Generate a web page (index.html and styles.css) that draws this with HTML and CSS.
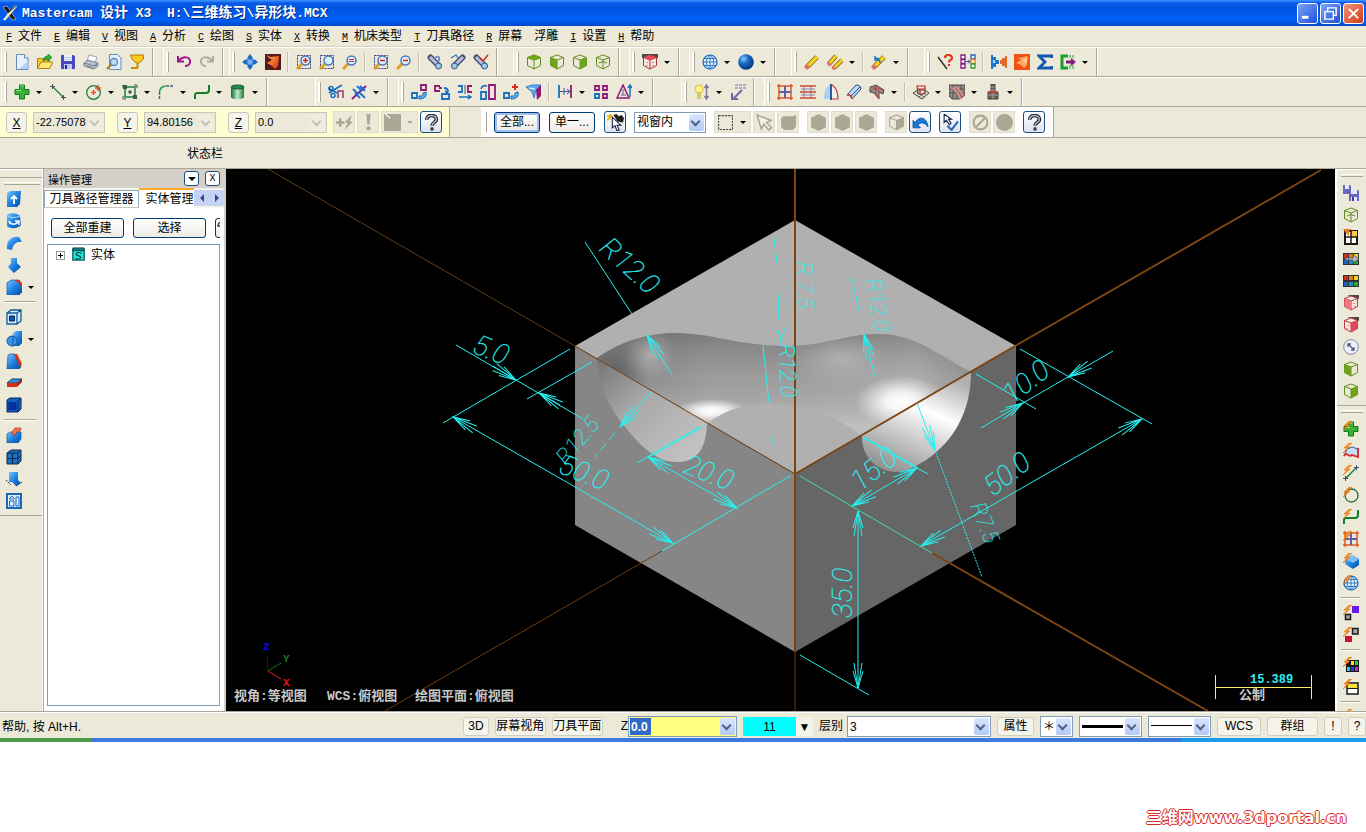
FILE: index.html
```html
<!DOCTYPE html>
<html lang="zh-CN">
<head>
    <meta charset="UTF-8">
    <meta name="viewport" content="width=device-width, initial-scale=1.0">
    <title>Mastercam 设计 X3</title>
    <link rel="stylesheet" href="styles.css">
</head>
<body>
    <!-- icon sprite -->
    <svg class="sprite" width="0" height="0" aria-hidden="true">
        <defs>
            <linearGradient id="gBlue" x1="0" y1="0" x2="1" y2="1"><stop offset="0" stop-color="#7cc4ff"/><stop offset=".5" stop-color="#1c80e0"/><stop offset="1" stop-color="#0848a0"/></linearGradient>
            <linearGradient id="gGreen"><stop offset="0" stop-color="#0c6a30"/><stop offset=".5" stop-color="#c0ecd0"/><stop offset="1" stop-color="#187838"/></linearGradient>
            <linearGradient id="gOrange" x1="0" y1="0" x2="1" y2="1"><stop offset="0" stop-color="#ffb060"/><stop offset="1" stop-color="#d83000"/></linearGradient>
            <radialGradient id="gSphere" cx=".35" cy=".3" r=".7"><stop offset="0" stop-color="#90d0ff"/><stop offset=".4" stop-color="#2070c8"/><stop offset="1" stop-color="#003880"/></radialGradient>
            <g id="lens"><path d="M1 15l5-5" stroke="#e0a020" stroke-width="3"/><circle cx="9.500" cy="6.500" r="4.500" fill="#d8f0ff" stroke="#5078b8" stroke-width="1.500"/></g>
            <path id="dash" d="M1.500 1.500h13v13h-13z" fill="none" stroke="#303878" stroke-dasharray="2 1"/>
            <path id="hex" d="M8 1l6.500 2.500v8L8 15l-6.500-3.500v-8zM1.500 3.500L8 6l6.500-2.500M8 6v9" stroke-width="1"/>
            <path id="bolt" d="M6 0L1 5h3L0 10l7-6H4l5-4z" fill="#ff9820" stroke="#e06000" stroke-width=".5"/>
        </defs>
        <symbol id="new" viewBox="0 0 16 16"><path d="M2.500 .5h8l3.500 3.500v11.500h-11.500z" fill="#e8f2ff" stroke="#6888b8"/><path d="M10.500 .5v3.500h3.500" fill="#fff" stroke="#6888b8"/><path d="M5 15h9V7z" fill="#b0d0f8"/></symbol>
        <symbol id="open" viewBox="0 0 16 16"><path d="M.5 14.500v-10h5l1 1.500h6v8.500z" fill="#f8c830" stroke="#b08010"/><path d="M.5 14.500L4 8h12l-3.500 6.500z" fill="#ffe878" stroke="#b08010"/><path d="M6 7c0-4 3-5 5-5V0l4 3.500L11 7V5C9 5 8 6 6 7z" fill="#30b030" stroke="#107010" stroke-width=".6"/></symbol>
        <symbol id="save" viewBox="0 0 16 16"><path d="M1 1h12.500L15 2.500V15H1z" fill="#4848b8"/><path d="M4 1h8v6H4z" fill="#f0f0ff"/><path d="M4 3.500h8M4 5.500h8" stroke="#a8b0d8" stroke-width=".7"/><path d="M4 10h8v5H4z" fill="#c0c8f0"/><path d="M5 11h2v4H5z" fill="#28288c"/></symbol>
        <symbol id="print" viewBox="0 0 16 16"><path d="M4 7l2-6 8 2-2 6z" fill="#fff" stroke="#8890a0" stroke-width=".8"/><path d="M1 9l4-3 10 3v3l-4 3-10-3z" fill="#b8c0cc" stroke="#687080" stroke-width=".8"/><path d="M1 9l10 3 4-3M4 12l6 2" fill="none" stroke="#687080" stroke-width=".8"/><path d="M12 12l2-1.500" stroke="#3080e0"/></symbol>
        <symbol id="preview" viewBox="0 0 16 16"><path d="M3.500 .5h8L15 4v11.500H3.500z" fill="#e0f0ff" stroke="#6888b8"/><circle cx="8" cy="8" r="3.500" fill="#b8dcf8" stroke="#5888b8" stroke-width="1.300"/><path d="M1 15l5-5" stroke="#b07830" stroke-width="2"/></symbol>
        <symbol id="cup" viewBox="0 0 16 16"><path d="M1.500 1h13v4L10 9H7L3 5z" fill="#ffc820" stroke="#b07800"/><path d="M8.500 9v5H2" fill="none" stroke="#c89000" stroke-width="2"/></symbol>
        <symbol id="undo" viewBox="0 0 16 16"><path d="M2 2v5.500h6" fill="none" stroke="#a01090" stroke-width="2"/><path d="M3 7c3-5 12-5 11 1 0 3-3 4-5 4" fill="none" stroke="#a01090" stroke-width="2"/></symbol>
        <symbol id="redo" viewBox="0 0 16 16"><path d="M14 2v5.500H8" fill="none" stroke="#b0ad9c" stroke-width="2"/><path d="M13 7C10 2 1 2 2 8c0 3 3 4 5 4" fill="none" stroke="#b0ad9c" stroke-width="2"/></symbol>
        <symbol id="fit" viewBox="0 0 16 16"><path d="M8 0l3 4H5zM8 16l3-4H5zM0 8l4-3v6zM16 8l-4-3v6z" fill="#1868c8"/><circle cx="8" cy="8" r="3.500" fill="#70b0f0" stroke="#1868c8" stroke-width="1.500"/></symbol>
        <symbol id="repaint" viewBox="0 0 16 16"><path d="M0 0h16v16H0z" fill="#58181c"/><path d="M2 1l3 2 9-1-1 10-3 3-3-3-5-3 5-3-4-3z" fill="url(#gOrange)"/></symbol>
        <symbol id="zwin" viewBox="0 0 16 16"><use href="#dash"/><use href="#lens"/><path d="M9.500 4v5M7 6.500h5" stroke="#e02010" stroke-width="1.500"/></symbol>
        <symbol id="ztarget" viewBox="0 0 16 16"><use href="#dash"/><use href="#lens"/></symbol>
        <symbol id="zundo" viewBox="0 0 16 16"><use href="#lens"/><path d="M7 5.500h5M7 7.500h5" stroke="#e02010" stroke-width="1.200"/></symbol>
        <symbol id="zdash" viewBox="0 0 16 16"><use href="#dash"/><use href="#lens"/><path d="M7 6.500h5" stroke="#e02010" stroke-width="1.500"/></symbol>
        <symbol id="zout" viewBox="0 0 16 16"><use href="#lens"/><path d="M7 6.500h5" stroke="#e02010" stroke-width="1.500"/></symbol>
        <symbol id="spinl" viewBox="0 0 16 16"><path d="M3.500 3.500l8 8" stroke="#485070" stroke-width="6" stroke-linecap="round"/><path d="M3 3l7 7" stroke="#b8c0dc" stroke-width="3"/><circle cx="11.500" cy="12" r="3" fill="#98ccf0" stroke="#405080"/><path d="M8 3h4v4" fill="none" stroke="#2858b8" stroke-width="1.200"/></symbol>
        <symbol id="spinr" viewBox="0 0 16 16"><path d="M12.500 3.500l-8 8" stroke="#485070" stroke-width="6" stroke-linecap="round"/><path d="M13 3l-7 7" stroke="#b8c0dc" stroke-width="3"/><circle cx="4.500" cy="12" r="3" fill="#98ccf0" stroke="#405080"/><path d="M1 4l5-3 2 3" fill="none" stroke="#2870d0" stroke-width="1.200"/></symbol>
        <symbol id="spinx" viewBox="0 0 16 16"><path d="M3.500 3.500l8 8" stroke="#485070" stroke-width="6" stroke-linecap="round"/><path d="M3 3l7 7" stroke="#b8c0dc" stroke-width="3"/><circle cx="11.500" cy="12" r="3" fill="#98ccf0" stroke="#405080"/><path d="M7 4l3 3 5-6" fill="none" stroke="#d02818" stroke-width="1.500"/></symbol>
        <symbol id="ctop" viewBox="0 0 16 16"><use href="#hex" fill="none" stroke="#608c20"/><path d="M8 1l6.500 2.500L8 6 1.500 3.500z" fill="#70a418" stroke="#70a418"/></symbol>
        <symbol id="cfront" viewBox="0 0 16 16"><use href="#hex" fill="none" stroke="#608c20"/><path d="M1.500 3.500L8 6v9l-6.500-3.500z" fill="#70a418"/></symbol>
        <symbol id="cside" viewBox="0 0 16 16"><use href="#hex" fill="none" stroke="#608c20"/><path d="M14.500 3.500L8 6v9l6.500-3.500z" fill="#70a418"/></symbol>
        <symbol id="ciso" viewBox="0 0 16 16"><use href="#hex" fill="none" stroke="#608c20"/><path d="M4 9l4-1.500L12 9" fill="none" stroke="#608c20"/></symbol>
        <symbol id="cred" viewBox="0 0 16 16"><path d="M0 0h16v4H0z" fill="#504848"/><use href="#hex" fill="#f8e8e0" stroke="#a03838"/><path d="M8 1l6.500 2.500L8 6 1.500 3.500z" fill="#e84858"/><path d="M5 8v1M11 8v1M5 11v1M11 11v1" stroke="#d03040"/></symbol>
        <symbol id="credl" viewBox="0 0 16 16"><path d="M4 0h12v4z" fill="#504848"/><use href="#hex" fill="#f8e8e0" stroke="#b83848"/><path d="M1.500 3.500L8 6v9l-6.500-3.500z" fill="#f07880"/><path d="M11 8v1M12 11v1" stroke="#d03040"/></symbol>
        <symbol id="credr" viewBox="0 0 16 16"><path d="M4 0h12v4z" fill="#504848"/><use href="#hex" fill="#f8e8e0" stroke="#b83848"/><path d="M14.500 3.500L8 6v9l6.500-3.500z" fill="#e04858"/><path d="M5 8v1M4 11v1" stroke="#d03040"/></symbol>
        <symbol id="globe" viewBox="0 0 16 16"><circle cx="8" cy="8" r="7" fill="#e0f0ff" stroke="#1868b8" stroke-width="1.200"/><path d="M8 1v14M1 8h14M2 4.500h12M2 11.500h12M8 1C3 5 3 11 8 15M8 1c5 4 5 10 0 14" fill="none" stroke="#1868b8" stroke-width=".8"/></symbol>
        <symbol id="sphere" viewBox="0 0 16 16"><circle cx="8" cy="8" r="7.800" fill="url(#gSphere)"/></symbol>
        <symbol id="pencil" viewBox="0 0 16 16"><path d="M3 13L13 3" stroke="#806010" stroke-width="5"/><path d="M3 13L13 3" stroke="#f8d020" stroke-width="3.500"/><path d="M1.500 14.500l3-3" stroke="#e07068" stroke-width="4.500"/></symbol>
        <symbol id="pencils" viewBox="0 0 16 16"><path d="M2 10l7-8M7 14l8-8" stroke="#806010" stroke-width="4.500"/><path d="M2 10l7-8M7 14l8-8" stroke="#f8d020" stroke-width="3"/><path d="M1 11l2-2M5.500 15l2-2" stroke="#e07068" stroke-width="4"/></symbol>
        <symbol id="unpencil" viewBox="0 0 16 16"><path d="M3 13L13 3" stroke="#806010" stroke-width="5"/><path d="M3 13L13 3" stroke="#f8d020" stroke-width="3.500"/><path d="M1.500 14.500l3-3" stroke="#e07068" stroke-width="4.500"/><path d="M4 5c3-2 5 0 5 4M4 2v4h4" fill="none" stroke="#1878c0" stroke-width="1.500"/></symbol>
        <symbol id="ask" viewBox="0 0 16 16"><path d="M1 3l9 12" stroke="#202020" stroke-width="1.300"/><path d="M8 4c0-4 7-4 7 0 0 2-3 2-3 4.500M12 10v2" fill="none" stroke="#e03818" stroke-width="2.200"/></symbol>
        <symbol id="swap" viewBox="0 0 16 16"><path d="M1 1h4v4H1zM1 5.500h4v4H1zM1 10h4v4H1z" fill="#fff" stroke="#801880" stroke-width="1.300"/><path d="M11 1h4v4h-4z" fill="#fff" stroke="#2060c0" stroke-width="1.300"/><path d="M11 5.500h4v4h-4z" fill="#fff" stroke="#e08020" stroke-width="1.300"/><path d="M11 10h4v4h-4z" fill="#fff" stroke="#30a030" stroke-width="1.300"/><path d="M6 7.500h4M8 5.500l2 2-2 2" fill="none" stroke="#3050b0"/></symbol>
        <symbol id="puzzle" viewBox="0 0 16 16"><path d="M0 1h2v2h3v3h3v4H5v3H2v2H0z" fill="#1878d0"/><path d="M16 2v12h-2v-2h-3v-2H9V6h2V4h3V2z" fill="#e06828"/><path d="M2 6h2v3H2z" fill="#b8dcf8"/></symbol>
        <symbol id="orange" viewBox="0 0 16 16"><path d="M0 0h16v16H0z" fill="#f05010"/><path d="M2 3l3 1 9-2-1 9-3 3-3-3-5-2 5-3z" fill="#ffa860"/><path d="M8 6l5-2-1 6z" fill="#ffd0a0"/></symbol>
        <symbol id="sigma" viewBox="0 0 16 16"><path d="M15 4V2H2l6 6-6 6h13v-2" fill="none" stroke="#1058b0" stroke-width="2.800"/></symbol>
        <symbol id="gout" viewBox="0 0 16 16"><path d="M8 2H2v12h6" fill="none" stroke="#18a028" stroke-width="3"/><path d="M10 1v14M13 1v14" stroke="#18a028" stroke-dasharray="3 7 4 2"/><path d="M6 6.500h5V4l5 4-5 4V9.500H6z" fill="#801880"/></symbol>
        <symbol id="plus" viewBox="0 0 16 16"><path d="M5.500 1h5v4.500H15v5h-4.500V15h-5v-4.500H1v-5h4.500z" fill="#38b038" stroke="#187818"/><path d="M6.500 2h3M2 6.500h5" stroke="#98e890"/></symbol>
        <symbol id="line" viewBox="0 0 16 16"><path d="M3 3l10 10" stroke="#188038" stroke-width="1.300"/><path d="M2.500 0v5M0 2.500h5M13.500 11v5M11 13.500h5" stroke="#405060"/></symbol>
        <symbol id="circle" viewBox="0 0 16 16"><circle cx="7.500" cy="8.500" r="6.800" fill="none" stroke="#188038" stroke-width="1.300"/><path d="M7.500 6v5M5 8.500h5M12 1v6M9 4h6" stroke="#e05020" stroke-width="1.500"/></symbol>
        <symbol id="rect" viewBox="0 0 16 16"><path d="M3 3h10v10H3z" fill="none" stroke="#188038" stroke-width="1.500"/><path d="M0 1h5v4H1zM11 11h4v4h-4zM6.500 6.500h3v3h-3z" fill="#405850"/><path d="M12 1h3v3M1 12v3h3" fill="none" stroke="#405850"/></symbol>
        <symbol id="fillet" viewBox="0 0 16 16"><path d="M1.500 15V9" stroke="#506080" stroke-width="1.500" stroke-dasharray="3 1"/><path d="M1.500 9c0-4 2-6.500 6-7" fill="none" stroke="#18a050" stroke-width="1.500"/><path d="M8 2h8" stroke="#506080" stroke-width="1.500" stroke-dasharray="3 1"/></symbol>
        <symbol id="spline" viewBox="0 0 16 16"><path d="M1 15v-4c0-2 1-2 3-2h8c2 0 3-1 3-3V1" fill="none" stroke="#108028" stroke-width="2"/></symbol>
        <symbol id="cyl" viewBox="0 0 16 16"><path d="M1 3v10c0 3 13 3 13 0V3z" fill="url(#gGreen)"/><ellipse cx="7.500" cy="3" rx="6.500" ry="2" fill="#288848" stroke="#0c6030"/></symbol>
        <symbol id="trim" viewBox="0 0 16 16"><path d="M0 4l9 5M1 9l8-5 5-3" stroke="#1870b8" stroke-width="1.800"/><circle cx="3" cy="4.500" r="2" fill="none" stroke="#1870b8" stroke-width="1.500"/><circle cx="5" cy="11.500" r="2" fill="none" stroke="#1870b8" stroke-width="1.500"/><path d="M10 14V7h5v7" fill="none" stroke="#903878" stroke-width="1.500"/></symbol>
        <symbol id="break" viewBox="0 0 16 16"><path d="M1 15L15 2" stroke="#901890" stroke-width="2"/><path d="M2 5l5 5M6 2l5 5M9 9l5 5M4 9l5 5M9 2l5 5" stroke="#1870d0" stroke-width="1.800"/></symbol>
        <symbol id="xmove" viewBox="0 0 16 16"><path d="M1 9h5v5H1z" fill="none" stroke="#1870c0" stroke-width="1.800"/><path d="M10 1h5v5h-5z" fill="none" stroke="#901878" stroke-width="1.800"/><path d="M8 12h3c1-1 1-2 1-3l3-1c1 4-1 7-7 7z" fill="#60a8e8" stroke="#1870c0"/></symbol>
        <symbol id="xrot" viewBox="0 0 16 16"><path d="M6 2H1v5h5M5 4h3" fill="none" stroke="#901878" stroke-width="1.800"/><path d="M8 10h7v5H8zM10 4c3 0 4 1 4 4M11 7l3 2" fill="none" stroke="#1870c0" stroke-width="1.800"/></symbol>
        <symbol id="xmirror" viewBox="0 0 16 16"><path d="M1 2h4v6H1" fill="none" stroke="#1870c0" stroke-width="1.800"/><path d="M15 2h-4v6h4" fill="none" stroke="#901878" stroke-width="1.800"/><path d="M8 1v9" stroke="#405080"/><path d="M2 13h12M11 11l3 2-3 2" fill="none" stroke="#1870c0" stroke-width="1.500"/></symbol>
        <symbol id="xscale" viewBox="0 0 16 16"><path d="M1 8h5v7H1z" fill="none" stroke="#1870c0" stroke-width="1.800"/><path d="M9 1h6v14H9z" fill="none" stroke="#901878" stroke-width="1.800"/><path d="M1 5c1-3 3-4 6-3" fill="none" stroke="#1870c0" stroke-width="1.500"/></symbol>
        <symbol id="xadd" viewBox="0 0 16 16"><path d="M1 9h5v5H1z" fill="none" stroke="#1870c0" stroke-width="1.800"/><path d="M8 12h3c1-1 1-2 1-3l3-1c1 4-1 7-7 7z" fill="#60a8e8" stroke="#1870c0"/><path d="M12 0v6M9 3h6" stroke="#e02818" stroke-width="2"/></symbol>
        <symbol id="xface" viewBox="0 0 16 16"><path d="M0 3l6-2h9l-5 5-2 8-2-6z" fill="#60a8f0" stroke="#1860b0" stroke-width=".7"/><path d="M10 6l5-5v11l-4 4z" fill="#901878"/><path d="M3 4l6 1" stroke="#fff"/></symbol>
        <symbol id="xspan" viewBox="0 0 16 16"><path d="M2 1v13" stroke="#1870c0" stroke-width="1.800"/><path d="M14 1v13" stroke="#901878" stroke-width="1.800"/><path d="M3 7.500h10M10 5l3 2.500L10 10M7 4v7" fill="none" stroke="#405090"/></symbol>
        <symbol id="xgrid" viewBox="0 0 16 16"><path d="M2 2h4v4H2zM10 2h4v4h-4z" fill="none" stroke="#901878" stroke-width="1.800"/><path d="M2 10h4v4H2z" fill="none" stroke="#1870c0" stroke-width="1.800"/><path d="M10 10h4v4h-4z" fill="none" stroke="#901878" stroke-width="1.800"/></symbol>
        <symbol id="xtri" viewBox="0 0 16 16"><path d="M1 14L7 1l6 13z" fill="none" stroke="#901878" stroke-width="1.500"/><path d="M7 5v6M5 11h5" stroke="#506080"/><path d="M14 1v12M12 4l2-3 2 3" fill="none" stroke="#1870c0" stroke-width="1.500"/></symbol>
        <symbol id="bulb" viewBox="0 0 16 16"><circle cx="5" cy="5" r="4" fill="#fff090" stroke="#d8c040"/><path d="M3 9h4v6H3z" fill="#d8c860"/><path d="M12.500 2v12M10.500 4l2-3 2 3M10.500 12l2 3 2-3" fill="none" stroke="#8078a8" stroke-width="1.500"/></symbol>
        <symbol id="dimarrow" viewBox="0 0 16 16"><path d="M12 6l-9 9M2 9v6h6" fill="none" stroke="#7068a0" stroke-width="2"/><path d="M5 1h11M5 4h11" stroke="#7068a0" stroke-dasharray="3 1"/></symbol>
        <symbol id="snet" viewBox="0 0 16 16"><path d="M2 2h12v12H2zM0 2h16M0 14h16M2 0v16M14 0v16" fill="none" stroke="#e05820" stroke-width="1.500"/><path d="M8 2v12M2 8h12" stroke="#6060a0" stroke-width="2"/></symbol>
        <symbol id="sruled" viewBox="0 0 16 16"><path d="M0 2h16M0 8h16M0 14h16" stroke="#d04828" stroke-width="1.500"/><path d="M1 5h14M1 11h14M4 2v12M11 2v12" stroke="#7070a0" stroke-width=".8"/></symbol>
        <symbol id="sarc" viewBox="0 0 16 16"><path d="M8 0C2 3 1 9 1 15h7z" fill="#a8d0f0"/><path d="M8 15h7c0-7-2-12-7-15" fill="#f0f0f8" stroke="#c04030" stroke-width="1.200"/><path d="M8 0v16" stroke="#204888" stroke-width="1.800"/></symbol>
        <symbol id="ssweep" viewBox="0 0 16 16"><path d="M1 11L10 1c3 0 5 1 5 4L6 15c-1-3-3-4-5-4zM5 12l9-9" fill="#b8d8f8" stroke="#304878"/><path d="M1 11c2-1 5 1 5 4" fill="none" stroke="#d03828" stroke-width="1.500"/></symbol>
        <symbol id="smesh" viewBox="0 0 16 16"><path d="M1 3l6-2 8 5-1 4-4-2v7l-5-6-4-1z" fill="#909090" stroke="#504848"/><path d="M2 7c3-4 7-4 13 0M4 3l8 6M8 2c-3 3-2 8 2 12" fill="none" stroke="#c83828"/></symbol>
        <symbol id="sbox" viewBox="0 0 16 16"><path d="M0 9l5-3h7l4 3-7 6z" fill="#d8e0d8" stroke="#384838"/><path d="M4 2h8v8H5zM4 5h8M7 5v5" fill="none" stroke="#b82828" stroke-width="1.200"/><path d="M4 8l7 5M12 8l-6 5" stroke="#384838" stroke-width=".7"/></symbol>
        <symbol id="shatch" viewBox="0 0 16 16"><path d="M0 1h16v10l-5 4H3l-3-3z" fill="#8c8c8c" stroke="#484040"/><path d="M0 5h16M0 9h16M4 1v13M8 1v13M12 1v13" stroke="#584848" stroke-width=".8"/><path d="M2 4c5 0 6 5 10 11M6 3c4 1 6 5 8 9" fill="none" stroke="#e08888" stroke-width="2"/></symbol>
        <symbol id="stower" viewBox="0 0 16 16"><path d="M6 0h4v8h3v7H3V8h3z" fill="#686060" stroke="#403838"/><path d="M3 11h10M8 8v7" stroke="#a8a098"/><path d="M6 3h4M6 6h4" stroke="#a89890"/><path d="M3 8h10" stroke="#d04030" stroke-width="1.500"/></symbol>
        <symbol id="help" viewBox="0 0 16 16"><path d="M3.500 5.500c0-6 9.500-5 9 0C12 8.500 8.500 8 8.500 11" fill="none" stroke="#182030" stroke-width="3.500"/><path d="M3.500 5.500c0-6 9.500-5 9 0C12 8.500 8.500 8 8.500 11" fill="none" stroke="#b0b8c8" stroke-width="1.500"/><circle cx="8.500" cy="14" r="1.800" fill="#404858"/></symbol>
        <symbol id="dplus" viewBox="0 0 16 16"><path d="M0 8h8M4 4v8" stroke="#aaa795" stroke-width="2.500"/><path d="M15 1L8 8h3l-3 7 8-8h-3z" fill="#aaa795"/></symbol>
        <symbol id="dbang" viewBox="0 0 16 16"><path d="M6 0h4L9 10H7z" fill="#aaa795"/><circle cx="8" cy="13.500" r="2" fill="#aaa795"/></symbol>
        <symbol id="dsq" viewBox="0 0 16 16"><path d="M0 0h16v16H0z" fill="#aaa795"/><path d="M1 0l5 4" stroke="#fff"/></symbol>
        <symbol id="dbox" viewBox="0 0 16 16"><path d="M1.500 1.500h13v13h-13z" fill="none" stroke="#404048" stroke-dasharray="2 1"/></symbol>
        <symbol id="pick" viewBox="0 0 16 16"><path d="M6 1l3-1 2 2 3-1 2 3-1 4-5-1z" fill="#202020"/><path d="M0 2h5M3 0v5M0 6l5-5" stroke="#e8b820" stroke-width="1.800"/><path d="M5 3v10l2.500-2 2 5 2-1-2-4.500h3.500z" fill="#fff" stroke="#102040"/></symbol>
        <symbol id="dcursor" viewBox="0 0 16 16"><path d="M1 1l4 13 2.500-4.500L12 15l2.500-2L10 8l4-2z" fill="#f4f2ea" stroke="#aaa795" stroke-width="1.500"/></symbol>
        <symbol id="dhex" viewBox="0 0 16 16"><path d="M8 0l7 3.500v9L8 16l-7-3.500v-9z" fill="#aaa795"/></symbol>
        <symbol id="dball" viewBox="0 0 16 16"><path d="M3 2h9l3-1v11l-3 3H4l-3-3V4z" fill="#aaa795"/></symbol>
        <symbol id="dcube" viewBox="0 0 16 16"><use href="#hex" fill="none" stroke="#aaa795"/><path d="M8 6l6.500-2.500v8L8 15z" fill="#aaa795"/></symbol>
        <symbol id="back" viewBox="0 0 16 16"><path d="M1 6v7h7L5.500 10.500C8 7 12 8 15 12 14 2 6 2 3 8z" fill="#1878d8" stroke="#084898" stroke-width=".8"/></symbol>
        <symbol id="accept" viewBox="0 0 16 16"><path d="M2 0v8l2-2 3 4 1.500-1.500L6 5h3z" fill="#fff" stroke="#102040"/><path d="M5 11l4 4 6-8" fill="none" stroke="#2868c0" stroke-width="2"/></symbol>
        <symbol id="dno" viewBox="0 0 16 16"><circle cx="8" cy="8" r="6.500" fill="none" stroke="#aaa795" stroke-width="2"/><path d="M4 12l8-8" stroke="#aaa795" stroke-width="2"/></symbol>
        <symbol id="ddisc" viewBox="0 0 16 16"><circle cx="8" cy="8" r="8" fill="#aaa795"/></symbol>
        <symbol id="extrude" viewBox="0 0 16 16"><path d="M1 2l3-2h11l-1 13-3 3H1z" fill="url(#gBlue)"/><path d="M8 13V5M5 8l3-3 3 3" fill="none" stroke="#fff" stroke-width="1.800"/></symbol>
        <symbol id="revolve" viewBox="0 0 16 16"><path d="M1 2c3-3 11-2 13 1l1 9c-3 4-12 4-14 1z" fill="url(#gBlue)"/><path d="M3 8c1 4 7 4 9 1M9 8h4v4" fill="none" stroke="#fff" stroke-width="1.500"/><path d="M2 3c3 2 8 2 12 0" fill="none" stroke="#b8e0ff"/></symbol>
        <symbol id="sweep" viewBox="0 0 16 16"><path d="M1 14C0 6 5 1 13 2l3 5c-5-1-9 2-10 8z" fill="url(#gBlue)"/></symbol>
        <symbol id="loft" viewBox="0 0 16 16"><path d="M5 1h6v5l4 4-7 6-6-6 3-4z" fill="url(#gBlue)"/></symbol>
        <symbol id="sfillet" viewBox="0 0 16 16"><path d="M1 4l4-3h8l3 4v8l-3 3H1z" fill="url(#gBlue)" stroke="#185898" stroke-width=".7"/><path d="M9 1h4l3 4v5c-1-4-3-6-7-9z" fill="#d83018"/></symbol>
        <symbol id="shell" viewBox="0 0 16 16"><path d="M1 4h10v11H1zM1 4l4-3h10v11l-4 3M11 4l4-3" fill="#d8ecff" stroke="#185898" stroke-width="1.300"/><path d="M3.500 7h5v5h-5z" fill="#0858b0" stroke="#042858"/></symbol>
        <symbol id="boolean" viewBox="0 0 16 16"><path d="M7 2l3-2h6v12l-3 3H7z" fill="url(#gBlue)"/><circle cx="6" cy="10" r="5" fill="#3898e8" stroke="#1858a0"/><path d="M7 5v10" stroke="#1858a0"/></symbol>
        <symbol id="draft" viewBox="0 0 16 16"><path d="M2 2l2-1h5l6 13-2 2H1z" fill="url(#gBlue)" stroke="#185898" stroke-width=".7"/><path d="M8 1l3 0 5 10-2 3z" fill="#d83018"/></symbol>
        <symbol id="slab" viewBox="0 0 16 16"><path d="M1 8l5-4h10l-5 4z" fill="#3090e0" stroke="#104070"/><path d="M1 8h10v4H1z" fill="#d83018"/><path d="M11 8l5-4v3l-5 5z" fill="#b02010"/></symbol>
        <symbol id="solidbox" viewBox="0 0 16 16"><path d="M1 3l3-2h11v11l-3 3H1z" fill="#1060c0" stroke="#082850"/><path d="M2.500 5h8v8h-8z" fill="#0030a0"/><path d="M12 4l3-3M12 4v11" stroke="#082850"/></symbol>
        <symbol id="delf" viewBox="0 0 16 16"><path d="M1 7l3-2h11v7l-3 4H1z" fill="url(#gBlue)" stroke="#185898" stroke-width=".7"/><path d="M6 5l3-4h6l-1 3-3 1-2 3H7z" fill="#f07848" stroke="#a03010" stroke-width=".7"/></symbol>
        <symbol id="mesh4" viewBox="0 0 16 16"><path d="M1 4l4-3h10v11l-3 3H1z" fill="#1870c8" stroke="#102848"/><path d="M6.500 4v11M1 9.500h11l3-3M12 4v11M1 4h11l3-3" fill="none" stroke="#102848"/></symbol>
        <symbol id="flip" viewBox="0 0 16 16"><path d="M3 1h9v8l3 3-5 3-4-4H3z" fill="url(#gBlue)"/><path d="M0 9l5 5M10 15l6-4" stroke="#203040" stroke-dasharray="2 1"/></symbol>
        <symbol id="layout" viewBox="0 0 16 16"><path d="M1 1h14v14H1z" fill="#e0f0ff" stroke="#1868b8" stroke-width="2"/><path d="M3.500 5L6 3l2 2v1H3.500zM3.500 8h4.500v5H3.500zM10 4h3v9h-3z" fill="none" stroke="#1868b8"/></symbol>
        <symbol id="solidroot" viewBox="0 0 16 16"><path d="M2 3v11h12V3z" fill="#20e8e0" stroke="#106060" stroke-width="1.500"/><path d="M2 1h12v3H2z" fill="#108080" stroke="#084848"/><path d="M11 7c-2-2-6-1-5.500 1s5 1 5 3-4 2.500-5.500 1" fill="none" stroke="#084848" stroke-width="1.200"/></symbol>
        <symbol id="arrowl" viewBox="0 0 16 16"><path d="M6 3C3 3 2 5 2 7h4" fill="none" stroke="#303030" stroke-width="1.300"/></symbol>
        <symbol id="saves" viewBox="0 0 16 16"><path d="M0 0h7l1 1v8H0zM6 5h9l1 1v10H6z" fill="#6868c0"/><path d="M2 0h4v4H2zM8 5h6v4H8zM8 12h6v4H8z" fill="#e8e8ff"/><path d="M9 12h2v4H9z" fill="#404098"/></symbol>
        <symbol id="win4" viewBox="0 0 16 16"><path d="M2 2h12v13H2z" fill="#fff" stroke="#201818" stroke-width="2"/><path d="M8 2h6v6H8z" fill="#f8c840"/><path d="M8 2v13M2 8h12" stroke="#201818" stroke-width="1.500"/><path d="M0 0h8L6 3v4L3 4z" fill="#f07818"/></symbol>
        <symbol id="color6" viewBox="0 0 16 16"><path d="M0 2h16v12H0z" fill="#303030"/><path d="M1 3h4v4H1z" fill="#d03020"/><path d="M6 3h4v4H6z" fill="#e08020"/><path d="M11 3h4v4h-4z" fill="#f0d820"/><path d="M1 9h4v4H1z" fill="#2060c0"/><path d="M6 9h4v4H6z" fill="#2090c0"/><path d="M11 9h4v4h-4z" fill="#30a030"/></symbol>
        <symbol id="color6a" viewBox="0 0 16 16"><use href="#color6"/><path d="M2 7h8V4l6 4-6 4V9H2z" fill="#b0b8c8" stroke="#404858" stroke-width=".7"/></symbol>
        <symbol id="expand" viewBox="0 0 16 16"><circle cx="8" cy="8" r="7.300" fill="#f0f0fa" stroke="#8088a8"/><path d="M5 5l6 6M5 8V5h3M11 8v3H8" fill="none" stroke="#505880" stroke-width="1.300"/></symbol>
        <symbol id="qplus" viewBox="0 0 16 16"><use href="#plus"/><use href="#bolt"/></symbol>
        <symbol id="qsurf" viewBox="0 0 16 16"><path d="M1 13C4 8 6 15 9 12l6 2V5c-3 2-5-3-8 0l-3 1z" fill="#c8dcf8" stroke="#2858a8"/><path d="M1 13c3-5 5 2 8-1l6 2V5" fill="none" stroke="#e02828" stroke-width="1.800"/><use href="#bolt"/></symbol>
        <symbol id="qline" viewBox="0 0 16 16"><path d="M3 13L13 3" stroke="#188038" stroke-width="1.500"/><path d="M2.500 11v5M0 13.500h5M13.500 0v5M11 2.500h5" stroke="#405060"/><use href="#bolt"/></symbol>
        <symbol id="qcircle" viewBox="0 0 16 16"><circle cx="8.500" cy="8.500" r="6.500" fill="none" stroke="#306830" stroke-width="1.300"/><use href="#bolt"/></symbol>
        <symbol id="qspline" viewBox="0 0 16 16"><use href="#spline"/><use href="#bolt"/></symbol>
        <symbol id="qnet" viewBox="0 0 16 16"><use href="#snet"/><use href="#bolt"/></symbol>
        <symbol id="qcube" viewBox="0 0 16 16"><path d="M2 6l7-4 7 4v6l-6 4-8-5z" fill="url(#gBlue)"/><path d="M2 6l8 4 6-4-7-4z" fill="#80c0f8"/><use href="#bolt"/></symbol>
        <symbol id="qglobe" viewBox="0 0 16 16"><use href="#globe"/><use href="#bolt"/></symbol>
        <symbol id="qpurple" viewBox="0 0 16 16"><path d="M9 1h7v7H9z" fill="#6818f0"/><path d="M2.500 9.500h5v5h-5z" fill="#a8a8a8" stroke="#181818" stroke-width="1.500"/><use href="#bolt"/></symbol>
        <symbol id="qred" viewBox="0 0 16 16"><path d="M9.500 1.500h5.500v5.500H9.500z" fill="#a8a8a8" stroke="#181818" stroke-width="1.500"/><path d="M2 9h7v6H2z" fill="#c81030"/><use href="#bolt"/></symbol>
        <symbol id="qcolors" viewBox="0 0 16 16"><path d="M3 3h13v12H3z" fill="#181818"/><path d="M8 4h3v4H8z" fill="#f0e020"/><path d="M12 4h3v4h-3z" fill="#30d030"/><path d="M4 10h3v4H4z" fill="#20d0e0"/><path d="M8 10h3v4H8z" fill="#2040f0"/><path d="M12 10h3v4h-3z" fill="#c030d0"/><use href="#bolt"/></symbol>
        <symbol id="qwin" viewBox="0 0 16 16"><path d="M4 4h11v11H4z" fill="#fff" stroke="#181818" stroke-width="1.500"/><path d="M5 5h9v4H5z" fill="#f8e040"/><path d="M4 9.500h11" stroke="#181818"/><use href="#bolt"/></symbol>
    </svg>

    <div class="app">
        <header class="titlebar">
            <svg class="logo" viewBox="0 0 16 16"><path d="M1 2l4-1 9 13-4 1z" fill="#181818" stroke="#d8d8d8" stroke-width=".6"/><path d="M14 1L2 15" stroke="#f0e8c0" stroke-width="2.500"/><path d="M7 7l7-6" stroke="#202020"/></svg>
            <h1>Mastercam <span class="zh">设计</span> X3&nbsp; H:\<span class="zh">三维练习</span>\<span class="zh">异形块</span>.MCX</h1>
            <button class="win" aria-label="最小化"><svg viewBox="0 0 16 16"><path d="M2 12h7" stroke="#fff" stroke-width="3"/></svg></button>
            <button class="win" aria-label="还原"><svg viewBox="0 0 16 16"><path d="M5 6V2h9v8h-3M2 6h9v8H2z" fill="none" stroke="#fff" stroke-width="1.500"/></svg></button>
            <button class="win close" aria-label="关闭"><svg viewBox="0 0 16 16"><path d="M3 3l10 10M13 3L3 13" stroke="#fff" stroke-width="2"/></svg></button>
        </header>

        <nav class="menu">
            <button><u>F</u>文件</button>
            <button><u>E</u>编辑</button>
            <button><u>V</u>视图</button>
            <button><u>A</u>分析</button>
            <button><u>C</u>绘图</button>
            <button><u>S</u>实体</button>
            <button><u>X</u>转换</button>
            <button><u>M</u>机床类型</button>
            <button><u>T</u>刀具路径</button>
            <button><u>R</u>屏幕</button>
            <button>浮雕</button>
            <button><u>I</u>设置</button>
            <button><u>H</u>帮助</button>
        </nav>

        <div class="toolbar">
            <div class="group">
                <button class="tool" aria-label="新建"><svg><use href="#new"/></svg></button>
                <button class="tool" aria-label="打开"><svg><use href="#open"/></svg></button>
                <button class="tool" aria-label="保存"><svg><use href="#save"/></svg></button>
                <button class="tool" aria-label="打印"><svg><use href="#print"/></svg></button>
                <button class="tool" aria-label="打印预览"><svg><use href="#preview"/></svg></button>
                <button class="tool" aria-label="文件转换"><svg><use href="#cup"/></svg></button>
            </div>
            <div class="group">
                <button class="tool" aria-label="撤销"><svg><use href="#undo"/></svg></button>
                <button class="tool" aria-label="重做"><svg><use href="#redo"/></svg></button>
            </div>
            <div class="group near">
                <button class="tool" aria-label="适度化"><svg><use href="#fit"/></svg></button>
                <button class="tool" aria-label="重画"><svg><use href="#repaint"/></svg></button>
                <span class="sep"></span>
                <button class="tool" aria-label="视窗放大"><svg><use href="#zwin"/></svg></button>
                <button class="tool" aria-label="目标放大"><svg><use href="#ztarget"/></svg></button>
                <button class="tool" aria-label="恢复缩放"><svg><use href="#zundo"/></svg></button>
                <span class="sep"></span>
                <button class="tool" aria-label="缩小一半"><svg><use href="#zdash"/></svg></button>
                <button class="tool" aria-label="缩小"><svg><use href="#zout"/></svg></button>
                <span class="sep"></span>
                <button class="tool" aria-label="动态旋转"><svg><use href="#spinl"/></svg></button>
                <button class="tool" aria-label="前一视角"><svg><use href="#spinr"/></svg></button>
                <button class="tool" aria-label="指定视角"><svg><use href="#spinx"/></svg></button>
            </div>
            <div class="group mid">
                <button class="tool" aria-label="俯视图"><svg><use href="#ctop"/></svg></button>
                <button class="tool" aria-label="前视图"><svg><use href="#cfront"/></svg></button>
                <button class="tool" aria-label="右视图"><svg><use href="#cside"/></svg></button>
                <button class="tool" aria-label="等视图"><svg><use href="#ciso"/></svg></button>
            </div>
            <div class="group">
                <button class="tool drop" aria-label="绘图平面"><svg><use href="#cred"/></svg></button>
            </div>
            <div class="group">
                <button class="tool drop" aria-label="线框"><svg><use href="#globe"/></svg></button>
                <button class="tool drop" aria-label="着色"><svg><use href="#sphere"/></svg></button>
            </div>
            <div class="group mid">
                <button class="tool" aria-label="删除"><svg><use href="#pencil"/></svg></button>
                <button class="tool drop" aria-label="删除重复"><svg><use href="#pencils"/></svg></button>
                <span class="sep"></span>
                <button class="tool drop" aria-label="恢复删除"><svg><use href="#unpencil"/></svg></button>
            </div>
            <div class="group mid">
                <button class="tool" aria-label="分析图素"><svg><use href="#ask"/></svg></button>
                <button class="tool" aria-label="分析属性"><svg><use href="#swap"/></svg></button>
                <span class="sep"></span>
                <button class="tool" aria-label="比较"><svg><use href="#puzzle"/></svg></button>
                <button class="tool" aria-label="外部程序"><svg><use href="#orange"/></svg></button>
                <button class="tool" aria-label="统计"><svg><use href="#sigma"/></svg></button>
                <button class="tool drop" aria-label="输出"><svg><use href="#gout"/></svg></button>
            </div>
        </div>

        <div class="toolbar">
            <div class="group">
                <button class="tool drop" aria-label="绘点"><svg><use href="#plus"/></svg></button>
                <button class="tool drop" aria-label="直线"><svg><use href="#line"/></svg></button>
                <button class="tool drop" aria-label="圆弧"><svg><use href="#circle"/></svg></button>
                <button class="tool drop" aria-label="矩形"><svg><use href="#rect"/></svg></button>
                <button class="tool drop" aria-label="倒圆角"><svg><use href="#fillet"/></svg></button>
                <button class="tool drop" aria-label="曲线"><svg><use href="#spline"/></svg></button>
                <button class="tool drop" aria-label="基本实体"><svg><use href="#cyl"/></svg></button>
            </div>
            <div class="group wide">
                <button class="tool" aria-label="修剪"><svg><use href="#trim"/></svg></button>
                <button class="tool drop" aria-label="打断"><svg><use href="#break"/></svg></button>
            </div>
            <div class="group">
                <button class="tool" aria-label="平移"><svg><use href="#xmove"/></svg></button>
                <button class="tool" aria-label="旋转"><svg><use href="#xrot"/></svg></button>
                <button class="tool" aria-label="镜像"><svg><use href="#xmirror"/></svg></button>
                <button class="tool" aria-label="比例缩放"><svg><use href="#xscale"/></svg></button>
                <button class="tool" aria-label="动态平移"><svg><use href="#xadd"/></svg></button>
                <button class="tool" aria-label="投影"><svg><use href="#xface"/></svg></button>
                <span class="sep"></span>
                <button class="tool drop" aria-label="补正"><svg><use href="#xspan"/></svg></button>
                <button class="tool" aria-label="阵列"><svg><use href="#xgrid"/></svg></button>
                <button class="tool drop" aria-label="拖曳"><svg><use href="#xtri"/></svg></button>
            </div>
            <div class="group far">
                <button class="tool drop" aria-label="标注"><svg><use href="#bulb"/></svg></button>
                <button class="tool" aria-label="注解"><svg><use href="#dimarrow"/></svg></button>
            </div>
            <div class="group">
                <button class="tool" aria-label="网状曲面"><svg><use href="#snet"/></svg></button>
                <button class="tool" aria-label="直纹曲面"><svg><use href="#sruled"/></svg></button>
                <button class="tool" aria-label="旋转曲面"><svg><use href="#sarc"/></svg></button>
                <button class="tool" aria-label="扫描曲面"><svg><use href="#ssweep"/></svg></button>
                <button class="tool drop" aria-label="曲面修剪"><svg><use href="#smesh"/></svg></button>
                <span class="sep"></span>
                <button class="tool drop" aria-label="曲面延伸"><svg><use href="#sbox"/></svg></button>
                <button class="tool drop" aria-label="曲面熔接"><svg><use href="#shatch"/></svg></button>
                <button class="tool drop" aria-label="曲面曲线"><svg><use href="#stower"/></svg></button>
            </div>
        </div>

        <div class="ribbon">
            <div class="coords">
                <label class="axis" for="cx"><u>X</u></label>
                <span class="combo dim"><input id="cx" value="-22.75078"></span>
                <label class="axis" for="cy"><u>Y</u></label>
                <span class="combo dim"><input id="cy" value="94.80156"></span>
                <label class="axis" for="cz"><u>Z</u></label>
                <span class="combo dim"><input id="cz" value="0.0"></span>
                <div class="icons">
                    <button class="sq off" aria-label="快速绘点"><svg><use href="#dplus"/></svg></button>
                    <button class="sq off" aria-label="自动抓点"><svg><use href="#dbang"/></svg></button>
                    <button class="sq off drop" aria-label="手动抓点"><svg><use href="#dsq"/></svg></button>
                    <button class="sq on" aria-label="帮助"><svg><use href="#help"/></svg></button>
                </div>
            </div>
            <div class="select">
                <button class="xp active">全部...</button>
                <button class="xp">单一...</button>
                <button class="sq on" aria-label="选取"><svg><use href="#pick"/></svg></button>
                <span class="combo window"><select aria-label="窗选方式"><option>视窗内</option></select></span>
                <div class="icons">
                    <button class="sq off drop" aria-label="矩形窗选"><svg><use href="#dbox"/></svg></button>
                    <button class="sq off" aria-label="选取图素"><svg><use href="#dcursor"/></svg></button>
                    <button class="sq off" aria-label="选取实体"><svg><use href="#dball"/></svg></button>
                </div>
                <div class="icons">
                    <button class="sq off" aria-label="选取边界"><svg><use href="#dhex"/></svg></button>
                    <button class="sq off" aria-label="选取实体面"><svg><use href="#dhex"/></svg></button>
                    <button class="sq off" aria-label="选取主体"><svg><use href="#dhex"/></svg></button>
                </div>
                <div class="icons">
                    <button class="sq off" aria-label="背面选取"><svg><use href="#dcube"/></svg></button>
                    <button class="sq on" aria-label="选取上次"><svg><use href="#back"/></svg></button>
                </div>
                <button class="sq on" aria-label="验证选取"><svg><use href="#accept"/></svg></button>
                <div class="icons">
                    <button class="sq off" aria-label="取消选取"><svg><use href="#dno"/></svg></button>
                    <button class="sq off" aria-label="结束选取"><svg><use href="#ddisc"/></svg></button>
                </div>
                <button class="sq on" aria-label="选取帮助"><svg><use href="#help"/></svg></button>
            </div>
        </div>

        <div class="prompt">状态栏</div>

        <main class="work">
            <aside class="rail left">
                <div class="stack">
                    <button class="tool" aria-label="挤出"><svg><use href="#extrude"/></svg></button>
                    <button class="tool" aria-label="旋转实体"><svg><use href="#revolve"/></svg></button>
                    <button class="tool" aria-label="扫描"><svg><use href="#sweep"/></svg></button>
                    <button class="tool" aria-label="举升"><svg><use href="#loft"/></svg></button>
                    <button class="tool drop" aria-label="实体倒圆角"><svg><use href="#sfillet"/></svg></button>
                    <span class="hsep"></span>
                    <button class="tool" aria-label="抽壳"><svg><use href="#shell"/></svg></button>
                    <button class="tool drop" aria-label="布尔运算"><svg><use href="#boolean"/></svg></button>
                    <button class="tool" aria-label="拔模"><svg><use href="#draft"/></svg></button>
                    <button class="tool" aria-label="薄片加厚"><svg><use href="#slab"/></svg></button>
                    <button class="tool" aria-label="实体修剪"><svg><use href="#solidbox"/></svg></button>
                    <span class="hsep"></span>
                    <button class="tool" aria-label="移除面"><svg><use href="#delf"/></svg></button>
                    <button class="tool" aria-label="曲面转实体"><svg><use href="#mesh4"/></svg></button>
                    <button class="tool" aria-label="特征"><svg><use href="#flip"/></svg></button>
                    <button class="tool" aria-label="三视图"><svg><use href="#layout"/></svg></button>
                </div>
            </aside>

            <section class="panel">
                <div class="panel-head">
                    <h2>操作管理</h2>
                    <button class="mini" aria-label="菜单"><svg viewBox="0 0 8 8"><path d="M0 2h8L4 6z" fill="#000"/></svg></button>
                    <button class="mini">X</button>
                </div>
                <div class="tabs">
                    <button class="tab">刀具路径管理器</button>
                    <button class="tab current">实体管理</button>
                    <button class="scroll" aria-label="向左"><svg viewBox="0 0 8 8"><path d="M6 0L2 4l4 4z" fill="#304890"/></svg></button>
                    <button class="scroll" aria-label="向右"><svg viewBox="0 0 8 8"><path d="M2 0l4 4-4 4z" fill="#304890"/></svg></button>
                </div>
                <div class="pane">
                    <div class="actions">
                        <button class="xp">全部重建</button>
                        <button class="xp">选择</button>
                        <button class="xp more" aria-label="帮助"><svg><use href="#arrowl"/></svg></button>
                    </div>
                    <div class="tree">
                        <button class="expand" aria-label="展开"><svg viewBox="0 0 7 7"><path d="M1 3.500h5M3.500 1v5" stroke="#000"/></svg></button>
                        <svg class="root"><use href="#solidroot"/></svg>
                        <span>实体</span>
                    </div>
                </div>
            </section>

            <svg class="view" viewBox="226 169 1109 542" preserveAspectRatio="xMidYMid meet">
                <defs>
                    <marker id="tip" viewBox="-26 -6 28 12" markerWidth="28" markerHeight="12" refX="0" refY="0" orient="auto-start-reverse" markerUnits="userSpaceOnUse">
                        <path d="M-25 -4L0 0l-25 4M-17 -5L0 0l-17 5" fill="none" stroke="#28f0f0"/>
                    </marker>
                    <linearGradient id="wall" gradientUnits="userSpaceOnUse" x1="597" y1="0" x2="971" y2="0">
                        <stop offset="0" stop-color="#707070"/><stop offset=".12" stop-color="#868686"/><stop offset=".3" stop-color="#9c9c9c"/><stop offset=".5" stop-color="#9c9c9c"/><stop offset=".65" stop-color="#a4a4a4"/><stop offset=".85" stop-color="#b4b4b4"/><stop offset="1" stop-color="#909090"/>
                    </linearGradient>
                    <linearGradient id="fade" gradientUnits="userSpaceOnUse" x1="0" y1="335" x2="0" y2="425">
                        <stop offset="0" stop-color="#606060" stop-opacity=".5"/><stop offset=".5" stop-color="#a0a0a0" stop-opacity=".3"/><stop offset="1" stop-color="#c4c4c4" stop-opacity=".8"/>
                    </linearGradient>
                    <radialGradient id="shine"><stop offset="0" stop-color="#fff"/><stop offset=".35" stop-color="#fff" stop-opacity=".85"/><stop offset="1" stop-color="#fff" stop-opacity="0"/></radialGradient>
                    <radialGradient id="glow"><stop offset="0" stop-color="#e8e8e8" stop-opacity=".8"/><stop offset="1" stop-color="#d0d0d0" stop-opacity="0"/></radialGradient>
                    <radialGradient id="shade"><stop offset="0" stop-color="#585858" stop-opacity=".8"/><stop offset="1" stop-color="#606060" stop-opacity="0"/></radialGradient>
                    <linearGradient id="lip" x1="0" y1="0" x2="1" y2="1"><stop offset="0" stop-color="#747474"/><stop offset=".4" stop-color="#a8a8a8"/><stop offset="1" stop-color="#c8c8c8"/></linearGradient>
                    <linearGradient id="lipr" x1=".7" y1="0" x2=".2" y2="1"><stop offset="0" stop-color="#b0b0b0"/><stop offset=".35" stop-color="#fff"/><stop offset=".6" stop-color="#d0d0d0"/><stop offset="1" stop-color="#8c8c8c"/></linearGradient>
                    <clipPath id="pocket"><path d="M597 358C625 339 650 333 678 333C715 334 735 345 785 346C825 346 845 334 878 334C915 334 935 353 971 372L862 436C835 415 800 403 770 403C740 404 720 413 707 424z"/></clipPath>
                </defs>

                <!-- far axes -->
                <path class="axis-thin" d="M268 169L575 346M795 652V711"/>
                <path class="axis-thick" d="M795 169V220M1015 346L1321 170"/>

                <!-- block -->
                <path fill="#b0b0b0" d="M795 220L1016 346L795 474L575 346z"/>
                <path fill="#868686" d="M575 346L795 474V652L575 525z"/>
                <path fill="#666" d="M1016 346L795 474V652L1016 525z"/>

                <!-- pocket -->
                <g clip-path="url(#pocket)">
                    <path fill="url(#wall)" d="M590 325H980V445H590z"/>
                    <path fill="url(#fade)" d="M590 325H980V445H590z"/>
                    <ellipse cx="615" cy="372" rx="34" ry="30" fill="url(#shade)"/>
                    <ellipse cx="650" cy="355" rx="26" ry="26" fill="url(#glow)" opacity=".5"/>
                    <ellipse cx="712" cy="411" rx="36" ry="12" fill="url(#shine)"/>
                    <ellipse cx="840" cy="358" rx="50" ry="26" fill="url(#glow)" opacity=".4"/>
                    <ellipse cx="902" cy="402" rx="46" ry="26" fill="url(#shine)"/>
                </g>
                <path fill="url(#lip)" d="M597 358C599 390 612 415 640 444C655 458 665 462 678 462C700 461 706 445 707 424z"/>
                <path fill="url(#lipr)" d="M971 372C971 410 955 440 926 460C915 467 905 472 895 472C873 470 862 455 862 436z"/>

                <!-- near axes -->
                <path class="axis-thin near-edge" d="M575 346L795 474M662 551L385 711"/>
                <path class="axis-thick" d="M795 220V652M795 474L1015 346M932 553L1208 711"/>

                <!-- extension lines -->
                <g class="cad">
                    <path d="M443 423L570 349M527 399L592 362M456 345L583 419M585 242L632 314"/>
                    <path d="M763 345L769 403M774 237l3 26M778 293l1 27M852 278l7 33M773 436v9"/>
                    <path d="M1020 349L1152 424M976 374L1036 409M790 476L662 551M800 655L869 695"/>
                    <path class="green" d="M800 476L932 553"/>
                    <path class="bold" d="M701 427L648 457M863 437L917 468"/>
                    <path d="M648 457L637 463M917 468L928 474"/>
                    <path d="M615 433L595 457" stroke-dasharray="9 5"/>
                    <path d="M935 450L982 577" stroke-dasharray="2 1"/>
                    <path marker-end="url(#tip)" d="M493 366L516 380"/>
                    <path marker-start="url(#tip)" d="M539 393L560 405"/>
                    <path marker-start="url(#tip)" marker-end="url(#tip)" d="M453 417L673 543"/>
                    <path marker-start="url(#tip)" d="M647 335L672 375"/>
                    <path marker-end="url(#tip)" d="M652 391L620 427"/>
                    <path marker-start="url(#tip)" marker-end="url(#tip)" d="M648 457L737 508"/>
                    <path marker-start="url(#tip)" d="M864 334L875 377"/>
                    <path marker-end="url(#tip)" d="M917 403L935 450"/>
                    <path marker-start="url(#tip)" marker-end="url(#tip)" d="M917 468L852 506"/>
                    <path marker-start="url(#tip)" d="M1068 377L1113 351"/>
                    <path marker-end="url(#tip)" d="M981 428L1023 403"/>
                    <path d="M1023 403L1068 377"/>
                    <path marker-start="url(#tip)" marker-end="url(#tip)" d="M1142 419L921 546"/>
                    <path marker-start="url(#tip)" marker-end="url(#tip)" d="M858 511V688"/>
                    <path d="M786 326l-6 17M778 330l3 12"/>
                </g>

                <!-- dimension values -->
                <g class="dims">
                    <text transform="translate(471 352) rotate(22)">5.0</text>
                    <text transform="translate(598 250) rotate(42)">R12.0</text>
                    <text class="short" transform="translate(779 344) rotate(88)">R12.0</text>
                    <text transform="translate(1012 405) rotate(-38)">10.0</text>
                    <text transform="translate(993 497) rotate(-38)">50.0</text>
                    <text transform="translate(557 472) rotate(22)">50.0</text>
                    <text transform="translate(682 472) rotate(22)">20.0</text>
                    <text transform="translate(860 492) rotate(-38)">15.0</text>
                    <text transform="translate(852 618) rotate(-90)">35.0</text>
                    <text class="ghost" transform="translate(566 466) rotate(-50)">R12.5</text>
                    <text class="ghost" transform="translate(970 506) rotate(68)">R7.5</text>
                    <text class="ghost" transform="translate(866 280) rotate(80)">R12.0</text>
                    <text class="ghost" transform="translate(797 262) rotate(88)">R 7.5</text>
                </g>

                <!-- view gizmo -->
                <path d="M267.500 671v-15" stroke="#0000e0"/>
                <path d="M268 671l13-8" stroke="#107818"/>
                <path d="M268 671l13 8" stroke="#f01818"/>
                <g class="gizmo">
                    <text x="263" y="650" fill="#0808f0">Z</text>
                    <text x="283" y="662" fill="#108018">Y</text>
                    <text x="283" y="686" fill="#f01010">X</text>
                </g>
                <g class="info">
                    <text x="234" y="700">视角:等视图</text>
                    <text x="327" y="700">WCS:俯视图</text>
                    <text x="415" y="700">绘图平面:俯视图</text>
                    <text x="1239" y="699">公制</text>
                    <text class="scale" x="1250" y="683">15.389</text>
                </g>
                <path d="M1215.500 675v24M1311.500 675v24M1215 687.500h97" stroke="#f0f060"/>
            </svg>

            <aside class="rail right">
                <div class="stack">
                    <button class="tool" aria-label="存储视角"><svg><use href="#saves"/></svg></button>
                    <button class="tool" aria-label="等视图"><svg><use href="#ciso"/></svg></button>
                    <button class="tool" aria-label="视窗"><svg><use href="#win4"/></svg></button>
                    <button class="tool" aria-label="清除颜色"><svg><use href="#color6a"/></svg></button>
                    <button class="tool" aria-label="颜色"><svg><use href="#color6"/></svg></button>
                    <button class="tool" aria-label="前平面"><svg><use href="#credl"/></svg></button>
                    <button class="tool" aria-label="右平面"><svg><use href="#credr"/></svg></button>
                    <button class="tool" aria-label="全屏"><svg><use href="#expand"/></svg></button>
                    <button class="tool" aria-label="前视图"><svg><use href="#cfront"/></svg></button>
                    <button class="tool" aria-label="右视图"><svg><use href="#cside"/></svg></button>
                </div>
                <div class="stack">
                    <button class="tool" aria-label="全部点"><svg><use href="#qplus"/></svg></button>
                    <button class="tool" aria-label="全部曲面"><svg><use href="#qsurf"/></svg></button>
                    <button class="tool" aria-label="全部直线"><svg><use href="#qline"/></svg></button>
                    <button class="tool" aria-label="全部圆弧"><svg><use href="#qcircle"/></svg></button>
                    <button class="tool" aria-label="全部曲线"><svg><use href="#qspline"/></svg></button>
                    <button class="tool" aria-label="全部网格"><svg><use href="#qnet"/></svg></button>
                    <button class="tool" aria-label="全部实体"><svg><use href="#qcube"/></svg></button>
                    <button class="tool" aria-label="全部线框"><svg><use href="#qglobe"/></svg></button>
                    <span class="hsep"></span>
                    <button class="tool" aria-label="转换结果"><svg><use href="#qpurple"/></svg></button>
                    <button class="tool" aria-label="转换群组"><svg><use href="#qred"/></svg></button>
                    <span class="hsep"></span>
                    <button class="tool" aria-label="按颜色"><svg><use href="#qcolors"/></svg></button>
                    <button class="tool" aria-label="按图层"><svg><use href="#qwin"/></svg></button>
                    <span class="hsep"></span>
                    <button class="tool" aria-label="更多"><svg viewBox="0 0 16 16"><use href="#bolt"/></svg></button>
                </div>
            </aside>
        </main>

        <div class="status">
            <span class="hint">帮助, 按 Alt+H.</span>
            <button class="flat">3D</button>
            <button class="flat long">屏幕视角</button>
            <button class="flat long">刀具平面</button>
            <div class="field">
                <label class="z" for="depth">Z</label>
                <span class="combo depth"><input id="depth" value="0.0"></span>
            </div>
            <div class="field">
                <button class="swatch">11</button>
                <button class="down" aria-label="颜色">▼</button>
            </div>
            <div class="field">
                <label for="level">层别</label>
                <span class="combo level"><input id="level" value="3"></span>
            </div>
            <button class="flat attr">属性</button>
            <span class="combo point"><select aria-label="点型"><option>＊</option></select></span>
            <span class="combo stroke"><select aria-label="线型"><option></option></select></span>
            <span class="combo stroke thin"><select aria-label="线宽"><option></option></select></span>
            <button class="flat wcs">WCS</button>
            <button class="flat long">群组</button>
            <button class="flat">!</button>
            <button class="flat">?</button>
        </div>
        <div class="taskbar"></div>
    </div>

    <footer class="credit">三维网www.3dportal.cn</footer>
</body>
</html>
```
FILE: styles.css
```css
* {
    box-sizing: border-box;
}
body {
    margin: 0;
    min-height: 100vh;
    display: flex;
    flex-direction: column;
    background: #fff;
    color: #000;
    font: 12px/16px "Liberation Sans", "Noto Sans CJK SC", sans-serif;
    overflow: hidden;
}
button, input, select {
    font: inherit;
    color: inherit;
    margin: 0;
    padding: 0;
}
button {
    border: 0;
    background: none;
    white-space: nowrap;
}
.sprite {
    position: absolute;
}
.app {
    background: #ece9d8;
}

/* title bar */
.titlebar {
    height: 26px;
    display: flex;
    align-items: center;
    gap: 2px;
    padding: 0 2px;
    background: linear-gradient(#3d95ff 0, #0a5ae8 3px, #0054e3 8px, #0062f8 20px, #0046c8 100%);
}
.logo {
    width: 16px;
    height: 16px;
}
.titlebar h1 {
    flex: 1;
    margin: 0 0 0 2px;
    color: #fff;
    font: bold 13px/20px "Liberation Mono", "Noto Sans CJK SC", monospace;
    text-shadow: 1px 1px #0a2a80;
    white-space: pre;
}
.zh {
    font-size: 14px;
}
.win {
    width: 21px;
    height: 21px;
    border: 1px solid #fff;
    border-radius: 3px;
    background: linear-gradient(135deg, #7ca4f8, #2050d8);
    display: flex;
    align-items: center;
    justify-content: center;
}
.win svg {
    width: 15px;
    height: 15px;
}
.close {
    background: linear-gradient(135deg, #f09878, #d03818);
}

/* menu */
.menu {
    height: 21px;
    display: flex;
    align-items: center;
    gap: 12px;
    padding: 0 6px;
    border-bottom: 1px solid #d8d2bd;
}
.menu u {
    display: inline-block;
    width: 6px;
    margin-right: 6px;
    font: 10px/14px "Liberation Mono", monospace;
}

/* toolbars */
.toolbar {
    height: 30px;
    display: flex;
    padding-left: 1px;
    border-top: 1px solid #fff;
    border-bottom: 1px solid #aca899;
}
.group {
    display: flex;
    align-items: center;
    padding: 0 4px 0 9px;
    margin-left: 10px;
    border-right: 1px solid #aca899;
    box-shadow: 1px 0 #fff, inset 1px 0 #fff;
    background: linear-gradient(#aca899, #aca899) 5px 4px / 1px 20px no-repeat, linear-gradient(#fff, #fff) 3px 4px / 2px 20px no-repeat;
}
.group:first-child {
    margin-left: 0;
}
.group.near {
    margin-left: 6px;
}
.group.mid {
    margin-left: 16px;
}
.group.far {
    margin-left: 28px;
}
.group.wide {
    margin-left: 48px;
}
.tool {
    width: 23px;
    height: 22px;
    display: flex;
    align-items: center;
    padding-left: 4px;
}
.tool svg {
    width: 16px;
    height: 16px;
    flex: none;
}
.tool.drop {
    width: 36px;
}
.drop::after {
    content: "";
    margin-left: 6px;
    border: 3px solid transparent;
    border-top-color: #000;
    border-bottom: 0;
}
.sep {
    width: 2px;
    height: 20px;
    margin: 0 3px;
    border-left: 1px solid #c5c2b4;
    border-right: 1px solid #f8f6ee;
}

/* coordinate and selection bars */
.ribbon {
    height: 31px;
    display: flex;
    border-bottom: 1px solid #aca899;
}
.coords {
    width: 450px;
    display: flex;
    align-items: center;
    padding-left: 6px;
    background: #fffdd2;
    border-right: 1px solid #aca899;
}
.axis {
    width: 21px;
    height: 21px;
    border: 1px solid #c9c7ba;
    border-radius: 3px;
    background: #f5f4ea;
    text-align: center;
    line-height: 20px;
}
.combo {
    position: relative;
    display: block;
    height: 21px;
    border: 1px solid #7f9db9;
    background: #fff;
}
.combo input, .combo select {
    width: 100%;
    height: 100%;
    border: 0;
    padding: 0 17px 0 2px;
    background: none;
    appearance: none;
    outline: 0;
    display: block;
}
.combo::before {
    content: "";
    position: absolute;
    top: 1px;
    right: 1px;
    bottom: 1px;
    width: 15px;
    border-radius: 2px;
    background: linear-gradient(#dbe6fd, #b3c9f8);
    pointer-events: none;
}
.combo::after {
    content: "";
    position: absolute;
    top: 5px;
    right: 6px;
    width: 5px;
    height: 5px;
    border: solid #4d6185;
    border-width: 0 2px 2px 0;
    transform: rotate(45deg);
    pointer-events: none;
}
.combo.dim {
    width: 72px;
    margin: 0 12px 0 6px;
    border-color: #c9c7ba;
    background: #ece9d8;
}
.combo.dim input {
    font-size: 11px;
}
.combo.dim::before {
    background: #efede2;
}
.combo.dim::after {
    border-color: #c5c2b4;
}
.icons {
    display: flex;
    gap: 2px;
}
.coords .icons {
    margin-left: -6px;
}
.sq {
    width: 22px;
    height: 22px;
    display: flex;
    align-items: center;
    padding-left: 2px;
}
.sq svg {
    width: 17px;
    height: 17px;
    flex: none;
}
.sq.off {
    background: #ece9d8;
    border: 1px solid #e0ddcc;
}
.sq.drop {
    width: 37px;
}
.coords .drop::after {
    border-top-color: #aca899;
}
.sq.on {
    border: 1px solid #1c4f80;
    border-radius: 3px;
    background: linear-gradient(#fff, #dfe4ee);
}
.select {
    display: flex;
    align-items: center;
    gap: 8px;
    margin-left: 31px;
    padding: 0 8px 0 13px;
    border-right: 1px solid #aca899;
    background: linear-gradient(#aca899, #aca899) 5px 5px / 1px 20px no-repeat, #fff;
}
.xp {
    height: 21px;
    border: 1px solid #003c74;
    border-radius: 3px;
    background: linear-gradient(#fff, #ecebe5);
}
.select .xp {
    width: 46px;
    margin-right: 1px;
}
.xp.active {
    box-shadow: inset 0 0 0 2px #a0bdf0;
}
.combo.window {
    width: 72px;
}
.prompt {
    height: 31px;
    padding-left: 187px;
    line-height: 32px;
    border-bottom: 1px solid #aca899;
}

/* work area */
.work {
    display: flex;
    height: calc(100vh - 289px);
    border-bottom: 1px solid #aca899;
}
.rail {
    flex: none;
    overflow: hidden;
    border-top: 1px solid #fff;
}
.left {
    width: 43px;
    padding-top: 7px;
    border-right: 1px solid #fff;
}
.right {
    width: 31px;
    border-left: 2px solid #fff;
}
.stack {
    padding: 10px 0 3px 2px;
    border-bottom: 1px solid #aca899;
    background: linear-gradient(#fff, #fff) 4px 4px / 36px 1px no-repeat, linear-gradient(#aca899, #aca899) 4px 6px / 36px 1px no-repeat;
}
.left .stack {
    border-top: 1px solid #aca899;
}
.right .stack {
    padding-top: 12px;
    background-size: 22px 1px;
}
.hsep {
    display: block;
    height: 2px;
    margin: 3px 6px 3px 2px;
    border-top: 1px solid #aca899;
    border-bottom: 1px solid #fff;
}

/* manager panel */
.panel {
    width: 183px;
    flex: none;
    display: flex;
    flex-direction: column;
    border-left: 1px solid #aca899;
    border-right: 2px solid #d4d0c8;
    background: #fff;
    overflow: hidden;
}
.panel-head {
    height: 19px;
    display: flex;
    align-items: center;
    gap: 6px;
    padding: 0 4px;
    background: #d4d0c8;
}
.panel-head h2 {
    flex: 1;
    margin: 0;
    font: 11px/16px "Noto Sans CJK SC", sans-serif;
}
.mini {
    width: 15px;
    height: 15px;
    border: 1px solid #1c4f80;
    border-radius: 3px;
    background: #fff;
    font: 10px/12px "Liberation Mono", monospace;
    display: flex;
    align-items: center;
    justify-content: center;
}
.mini svg, .scroll svg {
    width: 8px;
    height: 8px;
}
.tabs {
    height: 20px;
    display: flex;
    align-items: flex-end;
    background: #f4f3ee;
}
.tab {
    height: 18px;
    width: 95px;
    flex: none;
    border: 1px solid #91a7b4;
    border-bottom-color: #c9c7ba;
    background: #fff;
    overflow: hidden;
}
.tab.current {
    width: 55px;
    height: 20px;
    padding-left: 6px;
    border-width: 2px 0 0;
    border-color: #ffa928;
}
.scroll {
    flex: 1;
    height: 16px;
    align-self: center;
    background: #c6d3f7;
    line-height: 8px;
}
.pane {
    flex: 1;
    display: flex;
    flex-direction: column;
    padding: 10px 4px 5px 3px;
}
.actions {
    display: flex;
    gap: 9px;
    padding-left: 4px;
    overflow: hidden;
}
.actions .xp {
    width: 73px;
    height: 20px;
    flex: none;
    line-height: 16px;
}
.actions .more {
    text-align: left;
}
.more svg {
    width: 16px;
    height: 16px;
}
.tree {
    flex: 1;
    display: flex;
    align-items: flex-start;
    gap: 5px;
    margin-top: 6px;
    padding: 2px 8px;
    border: 1px solid #7f9db9;
}
.root {
    width: 15px;
    height: 15px;
}
.expand {
    width: 9px;
    height: 9px;
    margin: 4px 1px 0 0;
    border: 1px solid #919b9c;
    display: flex;
}

/* drawing */
.view {
    flex: 1;
    min-width: 0;
    height: 100%;
    background: #000;
}
.axis-thin {
    fill: none;
    stroke: #683c14;
}
.near-edge {
    stroke: #703c10;
}
.axis-thick {
    fill: none;
    stroke: #7c4410;
    stroke-width: 2px;
}
.cad {
    fill: none;
    stroke: #28f0f0;
}
.cad .green {
    stroke: #40e0a0;
}
.cad .bold {
    stroke-width: 2px;
}
.dims {
    fill: #28f0f0;
    stroke: #28f0f0;
    stroke-width: .3px;
    font: italic 100 28px Roboto, "Liberation Sans", sans-serif;
}
.dims .short {
    font-size: 22px;
}
.dims .ghost {
    opacity: .8;
    font-size: 22px;
}
.gizmo {
    font: bold 11px "Liberation Mono", monospace;
}
.info {
    fill: #c8c8c8;
    font: bold 13px "Liberation Mono", "Noto Sans CJK SC", monospace;
}
.info .scale {
    fill: #28f0f0;
    font-size: 12px;
}

/* status bar */
.status {
    height: 26px;
    display: flex;
    align-items: center;
    gap: 6px;
    padding: 2px 0 0 2px;
    border-top: 1px solid #fff;
    overflow: hidden;
}
.hint {
    flex: 1;
}
.flat {
    min-width: 18px;
    height: 19px;
    padding: 0 4px;
    border: 1px solid #d0cebf;
    border-radius: 3px;
    background: #f5f4ea;
    line-height: 17px;
}
.flat.long {
    width: 51px;
    padding: 0;
}
.attr {
    width: 37px;
}
.wcs {
    width: 44px;
}
.field {
    display: flex;
    align-items: center;
}
.field label {
    padding: 0 4px 2px 0;
}
.field .z {
    padding: 0 0 2px 12px;
}
.depth {
    width: 109px;
}
.depth input {
    color: #fff;
    font-weight: bold;
    background: linear-gradient(#316ac5, #316ac5) 1px 1px / 21px 17px no-repeat, #ffff80;
}
.swatch {
    width: 53px;
    height: 19px;
    background: #0ff;
    line-height: 14px;
}
.down {
    width: 17px;
    height: 19px;
    background: #f5f4ea;
}
.level {
    width: 144px;
}
.point {
    width: 33px;
}
.stroke {
    width: 63px;
}
.stroke select {
    background: linear-gradient(#000, #000) 2px 8px / 41px 3px no-repeat;
}
.stroke.thin select {
    background-size: 41px 1px;
}
.taskbar {
    height: 4px;
    background: linear-gradient(90deg, #4c9a4c 91px, #3c7ade 91px, #3c7ade 1181px, #1c9ae8 1181px);
}

.credit {
    flex: 1;
    display: flex;
    align-items: flex-end;
    justify-content: flex-end;
    padding: 0 19px 4px 0;
    color: #fff;
    font: bold 16px/20px "DejaVu Sans", "Noto Sans CJK SC", sans-serif;
    text-shadow: 1px 0 #d82828, -1px 0 #d82828, 0 1px #d82828, 0 -1px #d82828;
}
```
